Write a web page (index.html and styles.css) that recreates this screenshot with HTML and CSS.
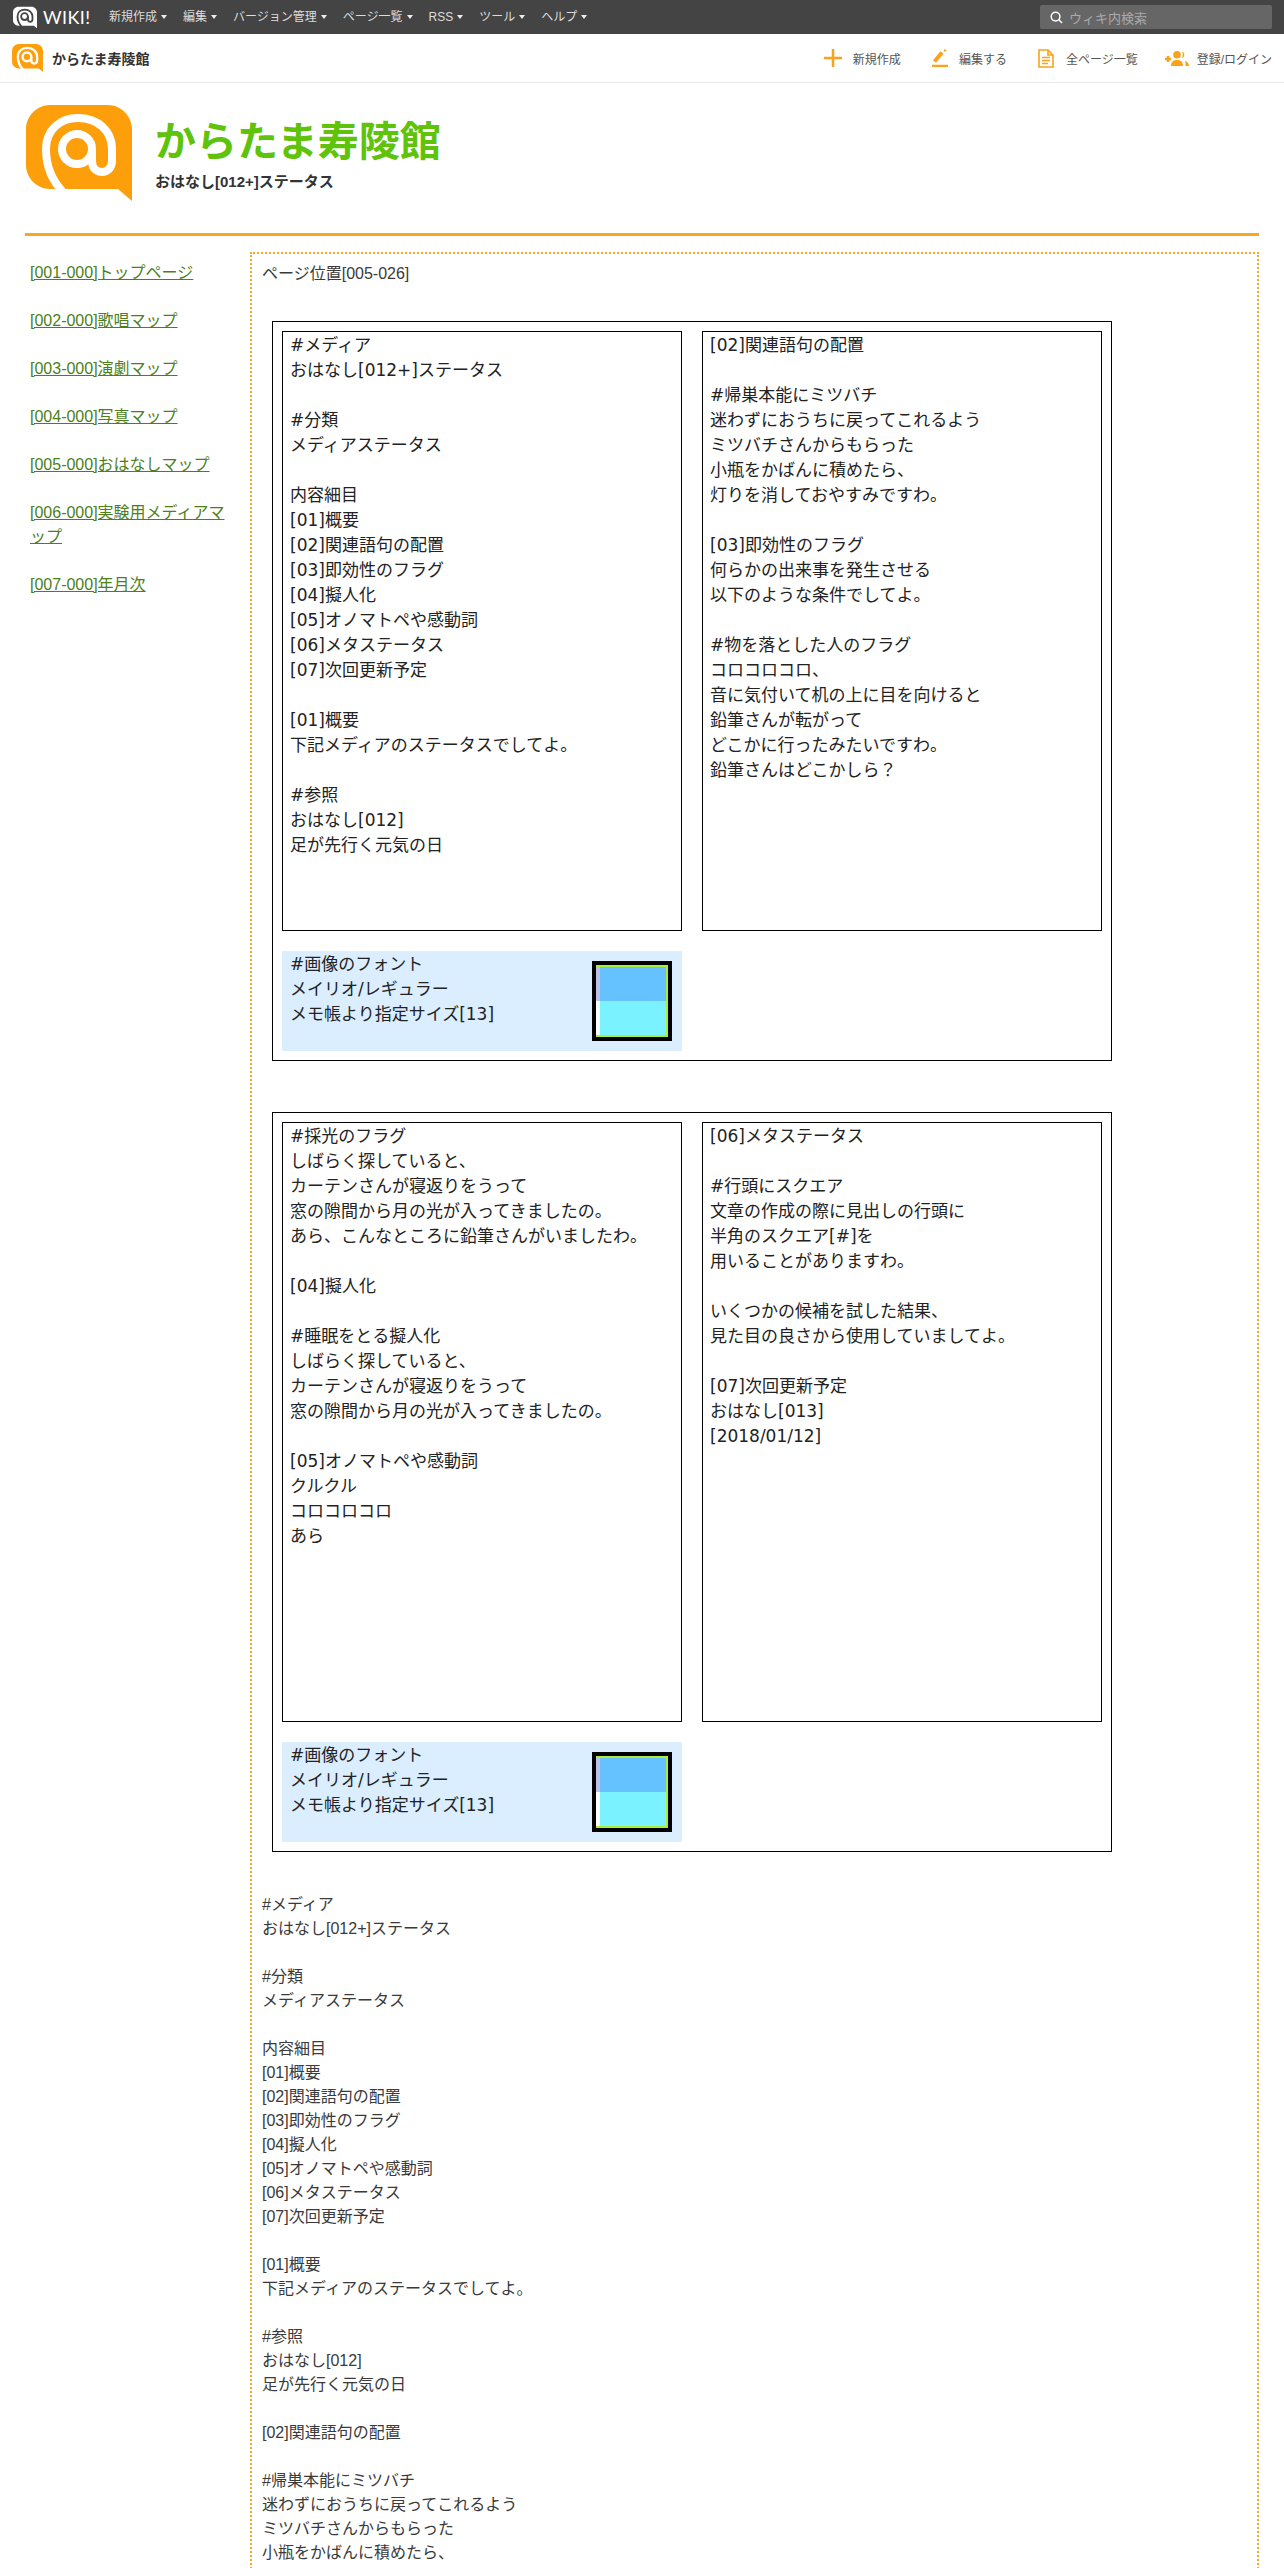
FILE: index.html
```html
<!DOCTYPE html>
<html lang="ja">
<head>
<meta charset="utf-8">
<title>おはなし[012+]ステータス - からたま寿陵館</title>
<link rel="stylesheet" href="styles.css">
</head>
<body>
<div class="page">
  <div class="topbar">
    <div class="brand">
      <svg class="logo-top" viewBox="0 0 106 96"><path class="body-white" d="M24 0H82C95 0 106 11 106 24V96L92 84H24C11 84 0 73 0 60V24C0 11 11 0 24 0Z"/><g class="at-dark"><path d="M38 88C25 75 20 60 20 44C20 25 34 13 52 13C72 13 86 26 86 44V56C86 63 81 67 76 67C70 67 66 63 66 56V44"/><circle cx="51" cy="44" r="15"/></g></svg>
      <span class="wordmark">WIKI!</span>
    </div>
    <nav class="mainnav">
      <a class="navitem">新規作成<i class="caret"></i></a>
      <a class="navitem">編集<i class="caret"></i></a>
      <a class="navitem">バージョン管理<i class="caret"></i></a>
      <a class="navitem">ページ一覧<i class="caret"></i></a>
      <a class="navitem">RSS<i class="caret"></i></a>
      <a class="navitem">ツール<i class="caret"></i></a>
      <a class="navitem">ヘルプ<i class="caret"></i></a>
    </nav>
    <div class="search">
      <svg class="search-icon" viewBox="0 0 14 14"><circle cx="6" cy="6" r="4.7"/><path d="M9.5 9.5L13 13"/></svg>
      <span>ウィキ内検索</span>
    </div>
  </div>

  <div class="actionbar">
    <div class="site">
      <svg class="logo-small" viewBox="0 0 106 96"><path class="body-orange" d="M24 0H82C95 0 106 11 106 24V96L92 84H24C11 84 0 73 0 60V24C0 11 11 0 24 0Z"/><g class="at-white"><path d="M38 88C25 75 20 60 20 44C20 25 34 13 52 13C72 13 86 26 86 44V56C86 63 81 67 76 67C70 67 66 63 66 56V44"/><circle cx="51" cy="44" r="15"/></g></svg>
      <span class="site-name">からたま寿陵館</span>
    </div>
    <div class="actions">
      <a class="action">
        <svg class="ico ico-plus" viewBox="0 0 18 18"><path class="ico-line" d="M9 0V18M0 9H18"/></svg>新規作成
      </a>
      <a class="action">
        <svg class="ico ico-pen" viewBox="0 0 16 18"><path class="ico-thick" d="M2.5 12.5L10 3.5"/><path class="ico-fill" d="M11.5 1.5L13 0L14.5 1.5L13 3Z"/><path class="ico-line" d="M0 17H16"/></svg>編集する
      </a>
      <a class="action">
        <svg class="ico ico-doc" viewBox="0 0 16 19"><path class="ico-outline" d="M1 1H10L15 6V18H1Z"/><path class="ico-outline" d="M10 1V6H15"/><path class="ico-outline" d="M4 8.5H12M4 11.5H12M4 14.5H10"/></svg>全ページ一覧
      </a>
      <a class="action action-user">
        <svg class="ico ico-user" viewBox="0 0 24 15"><path class="ico-line" d="M0 8H6M3 5V11"/><circle class="ico-fill" cx="12" cy="3.8" r="3.8"/><path class="ico-fill" d="M6 15C6 11 8 9 12 9C16 9 18 11 18 15Z"/><path class="ico-fill" d="M17 0.5C20 1 20 6.5 17 7.2C18 5 18 2.5 17 0.5Z"/><path class="ico-fill" d="M20 10C22 10.5 24 12 24 15H20.5C20.5 13 20.500 11.500 20 10Z"/></svg>登録/ログイン
      </a>
    </div>
  </div>

  <div class="wrapper">
    <header class="site-header">
      <svg class="logo-large" viewBox="0 0 106 96"><path class="body-orange" d="M24 0H82C95 0 106 11 106 24V96L92 84H24C11 84 0 73 0 60V24C0 11 11 0 24 0Z"/><g class="at-white"><path d="M38 88C25 75 20 60 20 44C20 25 34 13 52 13C72 13 86 26 86 44V56C86 63 81 67 76 67C70 67 66 63 66 56V44"/><circle cx="51" cy="44" r="15"/></g></svg>
      <div class="heading">
        <h1 class="title">からたま寿陵館</h1>
        <div class="subtitle">おはなし[012+]ステータス</div>
      </div>
    </header>

    <div class="columns">
      <aside class="sidebar">
        <p class="side-item"><a href="#">[001-000]トップページ</a></p>
        <p class="side-item"><a href="#">[002-000]歌唱マップ</a></p>
        <p class="side-item"><a href="#">[003-000]演劇マップ</a></p>
        <p class="side-item"><a href="#">[004-000]写真マップ</a></p>
        <p class="side-item"><a href="#">[005-000]おはなしマップ</a></p>
        <p class="side-item"><a href="#">[006-000]実験用メディアマップ</a></p>
        <p class="side-item"><a href="#">[007-000]年月次</a></p>
      </aside>

      <main class="main">
        <div class="position">ページ位置[005-026]</div>

        <section class="sheet">
          <div class="panel">#メディア
おはなし[012+]ステータス

#分類
メディアステータス

内容細目
[01]概要
[02]関連語句の配置
[03]即効性のフラグ
[04]擬人化
[05]オノマトペや感動詞
[06]メタステータス
[07]次回更新予定

[01]概要
下記メディアのステータスでしてよ。

#参照
おはなし[012]
足が先行く元気の日</div>
          <div class="panel">[02]関連語句の配置

#帰巣本能にミツバチ
迷わずにおうちに戻ってこれるよう
ミツバチさんからもらった
小瓶をかばんに積めたら、
灯りを消しておやすみですわ。

[03]即効性のフラグ
何らかの出来事を発生させる
以下のような条件でしてよ。

#物を落とした人のフラグ
コロコロコロ、
音に気付いて机の上に目を向けると
鉛筆さんが転がって
どこかに行ったみたいですわ。
鉛筆さんはどこかしら？</div>
          <div class="fontnote">
            <div class="fontnote-text">#画像のフォント
メイリオ/レギュラー
メモ帳より指定サイズ[13]</div>
            <div class="swatch"><div class="swatch-inner"><i class="sw-a"></i><i class="sw-b"></i><i class="sw-c"></i><i class="sw-d"></i></div></div>
          </div>
        </section>

        <section class="sheet sheet-second">
          <div class="panel">#採光のフラグ
しばらく探していると、
カーテンさんが寝返りをうって
窓の隙間から月の光が入ってきましたの。
あら、こんなところに鉛筆さんがいましたわ。

[04]擬人化

#睡眠をとる擬人化
しばらく探していると、
カーテンさんが寝返りをうって
窓の隙間から月の光が入ってきましたの。

[05]オノマトペや感動詞
クルクル
コロコロコロ
あら</div>
          <div class="panel">[06]メタステータス

#行頭にスクエア
文章の作成の際に見出しの行頭に
半角のスクエア[#]を
用いることがありますわ。

いくつかの候補を試した結果、
見た目の良さから使用していましてよ。

[07]次回更新予定
おはなし[013]
[2018/01/12]</div>
          <div class="fontnote">
            <div class="fontnote-text">#画像のフォント
メイリオ/レギュラー
メモ帳より指定サイズ[13]</div>
            <div class="swatch"><div class="swatch-inner"><i class="sw-a"></i><i class="sw-b"></i><i class="sw-c"></i><i class="sw-d"></i></div></div>
          </div>
        </section>

        <div class="bodytext">#メディア
おはなし[012+]ステータス

#分類
メディアステータス

内容細目
[01]概要
[02]関連語句の配置
[03]即効性のフラグ
[04]擬人化
[05]オノマトペや感動詞
[06]メタステータス
[07]次回更新予定

[01]概要
下記メディアのステータスでしてよ。

#参照
おはなし[012]
足が先行く元気の日

[02]関連語句の配置

#帰巣本能にミツバチ
迷わずにおうちに戻ってこれるよう
ミツバチさんからもらった
小瓶をかばんに積めたら、</div>
      </main>
    </div>
  </div>
</div>
</body>
</html>
```

FILE: styles.css
```css
* { box-sizing: border-box; }
html, body { margin: 0; padding: 0; background: #fff; }
body {
  font-family: "Liberation Sans", "Noto Sans CJK JP", sans-serif;
  font-size: 16px;
  color: #3a3a3a;
}
.page { height: 2568px; overflow: hidden; }

/* top bar */
.topbar {
  display: flex;
  align-items: center;
  height: 34px;
  background: #444;
  padding: 0 12px 0 13px;
}
.brand { display: flex; align-items: center; width: 96px; }
.logo-top { width: 24px; height: 23px; display: block; }
.wordmark {
  margin-left: 6px;
  font-family: "Lato", sans-serif;
  font-size: 18px;
  line-height: 24px;
  letter-spacing: 0.4px;
  color: #fff;
}
.body-white { fill: #fff; }
.body-orange { fill: #fd9f0b; }
.at-dark, .at-white { fill: none; stroke-width: 8; }
.at-dark { stroke: #444; }
.at-white { stroke: #fff; }
.mainnav { display: flex; flex: 1; gap: 16px; }
.navitem {
  display: flex;
  align-items: center;
  font-size: 12px;
  line-height: 18px;
  color: #ddd;
}
.caret {
  width: 0;
  height: 0;
  margin-left: 4px;
  border-left: 3px solid transparent;
  border-right: 3px solid transparent;
  border-top: 4px solid #eee;
}
.search {
  display: flex;
  align-items: center;
  width: 232px;
  height: 24px;
  background: #666;
  border-radius: 2px;
  padding-left: 10px;
  font-size: 13px;
  color: #aaa;
}
.search-icon { width: 13px; height: 13px; margin-right: 6px; fill: none; stroke: #fff; stroke-width: 1.6; }

/* action bar */
.actionbar {
  display: flex;
  align-items: center;
  justify-content: space-between;
  height: 49px;
  border-bottom: 1px solid #e8e8e8;
  padding: 0 12px;
}
.site { display: flex; align-items: center; }
.logo-small { width: 31px; height: 28px; display: block; }
.site-name { margin-left: 9px; font-size: 14px; font-weight: bold; color: #333; }
.actions { display: flex; align-items: center; gap: 31px; }
.action { display: flex; align-items: center; font-size: 12px; color: #555; }
.action-user { margin-left: -4px; }
.ico { display: block; margin-right: 11px; }
.ico-plus { width: 18px; height: 18px; }
.ico-pen { width: 16px; height: 18px; }
.ico-doc { width: 16px; height: 19px; margin-right: 12px; }
.ico-user { width: 24px; height: 15px; margin-right: 8px; }
.ico-line { fill: none; stroke: #f9a21a; stroke-width: 2.5; }
.ico-thick { fill: none; stroke: #f9a21a; stroke-width: 4; }
.ico-outline { fill: none; stroke: #f9a21a; stroke-width: 1.6; }
.ico-fill { fill: #f9a21a; }

/* page */
.wrapper { padding: 0 25px; }
.site-header {
  display: flex;
  align-items: flex-start;
  height: 153px;
  padding: 22px 0 0 1px;
  border-bottom: 3px solid #f9a71f;
}
.logo-large { width: 106px; height: 96px; display: block; }
.heading { margin: 13px 0 0 23px; }
.title {
  margin: 0;
  font-size: 41px;
  line-height: 48px;
  font-weight: bold;
  color: #5ec30a;
}
.subtitle {
  margin-top: 5px;
  font-size: 15px;
  line-height: 22px;
  font-weight: bold;
  color: #333;
}

.columns { display: flex; margin-top: 16px; }
.sidebar { width: 225px; flex: none; padding: 9px 18px 0 5px; }
.side-item { margin: 0 0 24px; line-height: 24px; }
.side-item a { color: #4e7f1a; }

.main {
  flex: 1;
  min-height: 2400px;
  border: 2px dotted #f9a71f;
  border-bottom: 0;
  padding: 8px 10px 0;
}
.position { line-height: 24px; }

.sheet {
  display: grid;
  grid-template-columns: 400px 400px;
  grid-template-rows: 600px 100px;
  gap: 20px;
  width: 840px;
  height: 740px;
  margin: 35px 0 0 10px;
  border: 1px solid #000;
  padding: 9px;
  font-family: "DejaVu Sans", "Noto Sans CJK JP", sans-serif;
  font-size: 17px;
  line-height: 25px;
  color: #222;
}
.sheet-second { margin-top: 51px; }
.panel {
  border: 1px solid #000;
  padding: 1px 8px 0 7px;
  white-space: pre-line;
}
.fontnote {
  display: flex;
  justify-content: space-between;
  align-items: flex-start;
  background: #dbeeff;
  padding: 1px 10px 0 8px;
}
.fontnote-text { white-space: pre-line; }
.swatch { width: 80px; height: 80px; margin-top: 9px; border: 4px solid #000; background: #a6f03c; }
.swatch-inner {
  display: grid;
  grid-template-columns: 4px 1fr;
  grid-template-rows: 1fr 1fr;
  height: 68px;
  margin: 2px 2px 2px 0;
}
.sw-a { background: #bdbfe8; }
.sw-b { background: #66c2ff; }
.sw-c { background: #fff; }
.sw-d { background: #7af2ff; }

.bodytext {
  margin-top: 41px;
  line-height: 24px;
  white-space: pre-line;
}
```
